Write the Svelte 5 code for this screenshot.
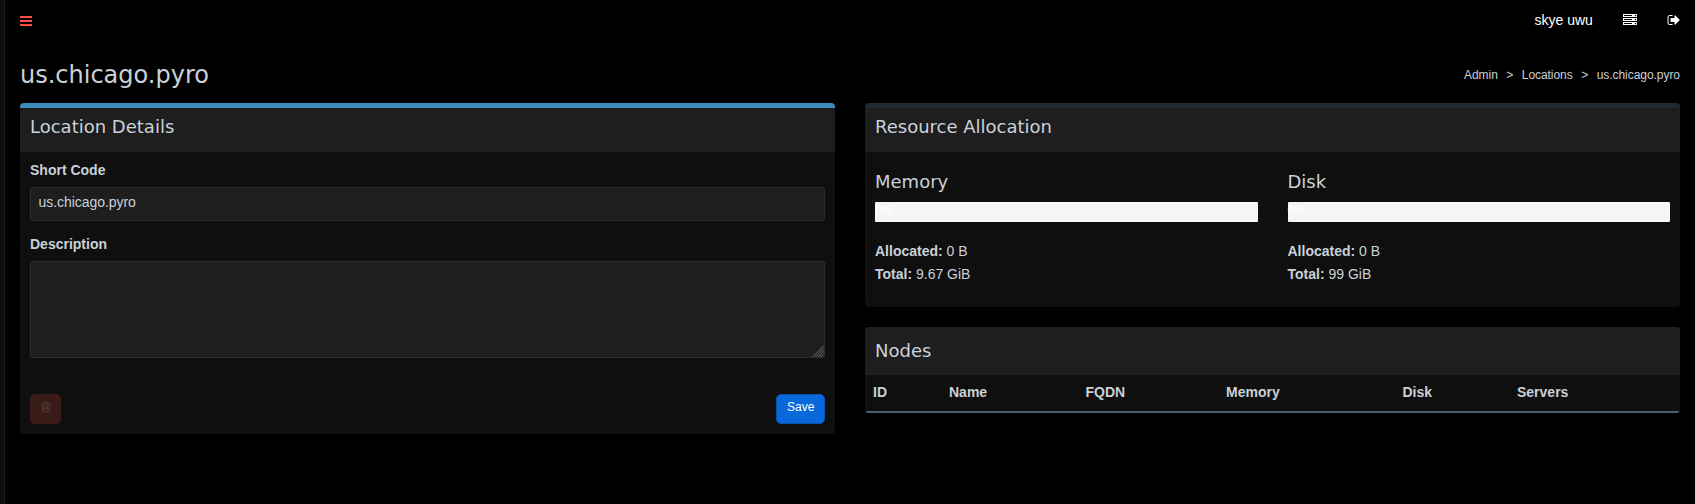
<script>
  const resources = [
    { name: 'Memory', percent: 0, allocated: '0 B', total: '9.67 GiB' },
    { name: 'Disk', percent: 0, allocated: '0 B', total: '99 GiB' }
  ];
  const columns = ['ID', 'Name', 'FQDN', 'Memory', 'Disk', 'Servers'];
  let code = 'us.chicago.pyro';
</script>

<div class="page">
  <aside></aside>
  <div class="main">
    <nav>
      <button class="toggle" aria-label="Toggle navigation">
        <svg width="12" height="10" viewBox="0 0 12 10" fill="currentColor" shape-rendering="crispEdges">
          <path d="M0 0h12v2H0zM0 4h12v2H0zM0 8h12v2H0z" />
        </svg>
      </button>
      <div class="user">
        <span class="username">skye uwu</span>
        <svg class="server" width="14" height="14" viewBox="0 0 1792 1792" fill="currentColor">
          <path d="M128 1408h1024v-128h-1024v128zM128 896h1024v-128h-1024v128zM1696 1344q0-40-28-68t-68-28-68 28-28 68 28 68 68 28 68-28 28-68zM128 384h1024v-128h-1024v128zM1696 832q0-40-28-68t-68-28-68 28-28 68 28 68 68 28 68-28 28-68zM1696 320q0-40-28-68t-68-28-68 28-28 68 28 68 68 28 68-28 28-68zM1792 1152v384h-1792v-384h1792zM1792 640v384h-1792v-384h1792zM1792 128v384h-1792v-384h1792z" />
        </svg>
        <svg class="signout" width="14" height="14" viewBox="0 0 1792 1792" fill="currentColor">
          <path d="M704 1440q0 4 1 20t.5 26.5-3 23.5-10 19.5-20.5 6.5h-320q-119 0-203.5-84.5t-84.5-203.5v-704q0-119 84.5-203.5t203.5-84.5h320q13 0 22.5 9.5t9.5 22.5q0 4 1 20t.5 26.5-3 23.5-10 19.5-20.5 6.5h-320q-66 0-113 47t-47 113v704q0 66 47 113t113 47h312l11.5 1 11.5 3 8 5.5 7 9 2 13.5zm928-544q0 26-19 45l-544 544q-19 19-45 19t-45-19-19-45v-288h-448q-26 0-45-19t-19-45v-384q0-26 19-45t45-19h448v-288q0-26 19-45t45-19 45 19l544 544q19 19 19 45z" />
        </svg>
      </div>
    </nav>

    <header>
      <h1>us.chicago.pyro</h1>
      <div class="crumbs">
        <span>Admin</span><i>&gt;</i><span>Locations</span><i>&gt;</i><span>us.chicago.pyro</span>
      </div>
    </header>

    <div class="columns">
      <section class="box primary details">
        <h3 class="box-title">Location Details</h3>
        <div class="form">
          <label for="short">Short Code</label>
          <input id="short" value={code} />
          <label for="long">Description</label>
          <div class="area">
            <textarea id="long"></textarea>
            <svg class="grip" width="12" height="12" viewBox="0 0 12 12" stroke="#858585" stroke-width="0.8">
              <path d="M0.5 12L12 0.5M3.2 12L12 3.2M5.9 12L12 5.9M8.6 12L12 8.6" />
            </svg>
          </div>
        </div>
        <footer>
          <button class="btn delete" disabled aria-label="Delete">
            <svg width="12" height="12" viewBox="0 0 1792 1792" fill="currentColor">
              <path d="M704 736v576q0 14-9 23t-23 9h-64q-14 0-23-9t-9-23v-576q0-14 9-23t23-9h64q14 0 23 9t9 23zm256 0v576q0 14-9 23t-23 9h-64q-14 0-23-9t-9-23v-576q0-14 9-23t23-9h64q14 0 23 9t9 23zm256 0v576q0 14-9 23t-23 9h-64q-14 0-23-9t-9-23v-576q0-14 9-23t23-9h64q14 0 23 9t9 23zm128 724v-948h-896v948q0 22 7 40.5t14.5 27 10.5 8.5h832q3 0 10.5-8.5t14.5-27 7-40.5zm-672-1076h448l-48-117q-7-9-17-11h-317q-10 2-17 11zm928 32v64q0 14-9 23t-23 9h-96v948q0 83-47 143.5t-113 60.5h-832q-66 0-113-58.5t-47-141.5v-952h-96q-14 0-23-9t-9-23v-64q0-14 9-23t23-9h309l70-167q15-37 54-63t79-26h320q40 0 79 26t54 63l70 167h309q14 0 23 9t9 23z" />
            </svg>
          </button>
          <button class="btn save">Save</button>
        </footer>
      </section>

      <div class="stack">
        <section class="box default allocation">
          <h3 class="box-title">Resource Allocation</h3>
          <div class="resources">
            {#each resources as r}
              <div class="resource">
                <h3>{r.name}</h3>
                <div class="progress"><span>{r.percent}%</span></div>
                <p><b>Allocated:</b> {r.allocated}</p>
                <p><b>Total:</b> {r.total}</p>
              </div>
            {/each}
          </div>
        </section>
        <section class="box nodes">
          <h3 class="box-title">Nodes</h3>
          <div class="thead">
            {#each columns as c}<b>{c}</b>{/each}
          </div>
        </section>
      </div>
    </div>
  </div>
</div>

<style>
  :global(body) { background: #000; }
  * { box-sizing: border-box; }
  .page {
    display: flex;
    height: 504px;
    overflow: hidden;
    background: #000;
    color: #cad1d8;
    font: 14px/20px 'Liberation Sans', Arial, sans-serif;
  }
  aside { width: 5px; background: #0f0f0f; border-right: 1px solid #222; }
  .main { flex: 1; padding: 0 15px; }
  h1, h3, p { margin: 0; font-weight: 400; }
  h1, h3 { font-family: 'DejaVu Sans', sans-serif; }
  button { font-family: inherit; }
  svg { display: block; flex: none; }

  nav { height: 50px; display: flex; justify-content: space-between; align-items: flex-start; }
  .toggle { margin-top: 16px; padding: 0; border: 0; background: none; color: #ff4d43; }
  .user { display: flex; color: #fff; padding-top: 10px; }
  .username { width: 88.5px; }
  .server { margin: 3px 29.5px 0 0; }
  .signout { margin: 3px -0.5px 0 0; }

  header { height: 53px; display: flex; justify-content: space-between; }
  h1 { font-size: 24px; line-height: 26px; margin-top: 12px; }
  .crumbs { display: flex; font-size: 12px; line-height: 17px; margin-top: 17px; letter-spacing: -0.05px; }
  .crumbs i { font: 12px/17px 'Liberation Sans', sans-serif; width: 24px; text-align: center; }

  .columns { display: grid; grid-template-columns: 815px 815px; gap: 30px; align-items: start; }
  .box { background: #0f0f0f; border-radius: 4px; overflow: hidden; }
  .primary { border-top: 5px solid #3c8dbc; }
  .default { border-top: 5px solid #1f2933; }
  .box-title { height: 44px; padding: 10px; background: #1e1e1e; font-size: 18px; line-height: 18px; }
  .details { height: 331px; display: flex; flex-direction: column; }
  .form { padding: 8px 10px 10px; flex: 1; }
  label { display: block; font-weight: 700; margin-bottom: 7px; height: 20px; }
  input {
    display: block;
    width: 100%;
    height: 34px;
    margin-bottom: 13px;
    padding: 4px 7.5px 8px;
    letter-spacing: -0.05px;
  }
  input, textarea {
    font: 14px/20px 'Liberation Sans', Arial, sans-serif;
    color: #cad1d8;
    background: #1e1e1e;
    border: 1px solid #2d2d2d;
    border-radius: 2px;
  }
  .area { position: relative; }
  textarea { display: block; width: 100%; height: 97px; resize: none; }
  .grip { position: absolute; right: 1px; bottom: 1px; }
  footer { padding: 10px; display: flex; justify-content: space-between; }
  .btn {
    display: flex;
    align-items: flex-start;
    height: 30px;
    padding: 4px 10px 0;
    font-size: 12px;
    line-height: 16px;
    border: 1px solid;
    border-radius: 5px;
  }
  .delete { width: 31px; padding: 6px 8.5px 0; background: #391b17; border-color: #421a17; color: #55403d; }
  .save { width: 49px; background: #0969da; border-color: #0753b2; color: #fff; }

  .stack { display: grid; gap: 20px; }
  .allocation { height: 204px; }
  .resources { display: grid; grid-template-columns: 1fr 1fr; gap: 30px; padding: 20px 10px; }
  .resource h3 { font-size: 18px; line-height: 20px; margin-bottom: 10px; }
  .progress { height: 20px; margin-bottom: 18px; background: #f5f5f5; border-radius: 1px; color: #fff; font-size: 12px; line-height: 16px; }
  .resource p { line-height: 23px; }
  .nodes .box-title { height: 48px; padding-top: 15px; }
  .thead {
    display: grid;
    grid-template-columns: 76px 136.5px 140.5px 176.5px 114.5px 1fr;
    height: 38px;
    padding: 7px 8px;
    border-bottom: 2px solid #515f6c;
  }
</style>
